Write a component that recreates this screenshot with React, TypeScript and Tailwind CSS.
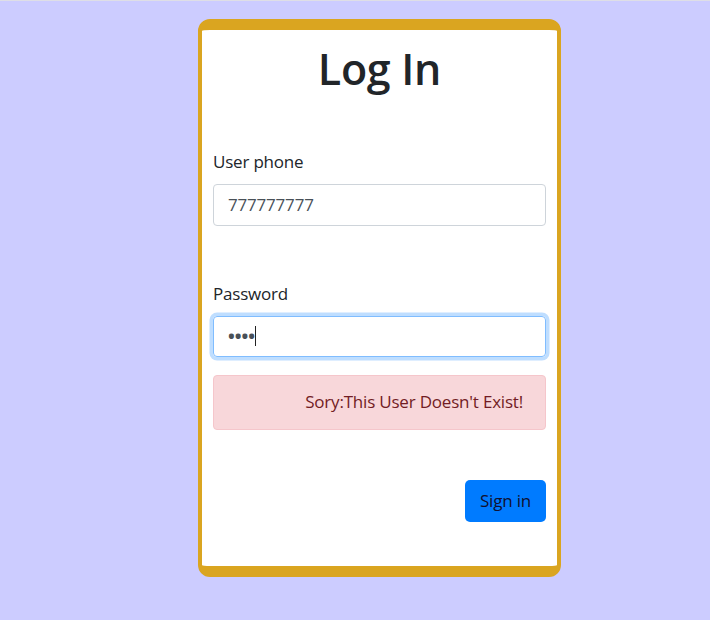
import React from "react";

export default function App() {
  return (
    <div
      className="min-h-[620px] w-full bg-[#ccccff] border-t-[1.5px] border-[#dedee6] pt-[17.5px]"
      style={{ fontFamily: '"Open Sans", "Noto Sans", sans-serif' }}
    >
      <div className="ml-[198px] w-[363px] h-[558px] bg-white border-x-[4px] border-y-[11px] border-[#daa520] rounded-[12px] px-[11px] flex flex-col">
        <h1 className="mt-[13px] text-center text-[43px] leading-[52.8px] font-semibold tracking-[-0.3px] text-[#212529]">
          Log In
        </h1>
        <label className="mt-[54px] text-[17px] leading-[26.4px] tracking-[-0.2px] text-[#212529]">
          User phone
        </label>
        <div className="mt-[8.5px] h-[42px] border border-[#ced4da] rounded-[4px] px-[14px] flex items-center text-[17px] tracking-[-0.2px] text-[#495057]">
          777777777
        </div>
        <label className="mt-[55px] text-[17px] leading-[26.4px] tracking-[-0.2px] text-[#212529]">
          Password
        </label>
        <div className="mt-[8px] h-[41px] border border-[#80bdff] rounded-[4px] px-[14px] flex items-center text-[#495057] shadow-[0_0_0_3.5px_rgba(0,123,255,0.25)]">
          <span className="text-[18px] leading-none font-bold">••••</span>
          <span className="w-px h-[20px] bg-[#222]" />
        </div>
        <div className="mt-[18px] h-[55px] bg-[#f8d7da] border border-[#f5c6cb] rounded-[4px] px-[22px] flex items-center justify-end text-[17px] tracking-[-0.2px] text-[#721c24]">
          Sory:This User Doesn't Exist!
        </div>
        <div className="mt-[50px] flex justify-end">
          <button className="h-[42px] w-[81px] bg-[#007bff] rounded-[5px] text-[17px] tracking-[-0.2px] text-[#101030]">
            Sign in
          </button>
        </div>
      </div>
    </div>
  );
}
